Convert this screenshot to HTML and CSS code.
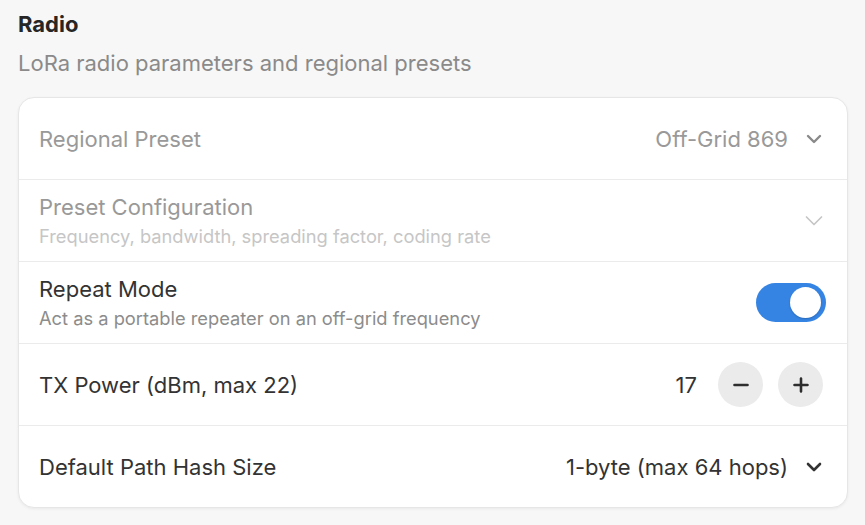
FILE: index.html
```html
<!DOCTYPE html>
<html>
<head>
<meta charset="utf-8">
<link rel="stylesheet" href="styles.css">
</head>
<body>
<div class="page">
  <h1 class="title">Radio</h1>
  <p class="subtitle">LoRa radio parameters and regional presets</p>
  <div class="card">
    <div class="row disabled">
      <div class="text"><div class="label">Regional Preset</div></div>
      <div class="control">
        <span class="value">Off-Grid 869</span>
        <svg class="chev" viewBox="0 0 16 16" width="16" height="16"><path d="M2 5 L8 11 L14 5" fill="none" stroke="currentColor" stroke-width="2.4" stroke-linecap="round" stroke-linejoin="round"/></svg>
      </div>
    </div>
    <div class="row disabled faint">
      <div class="text">
        <div class="label">Preset Configuration</div>
        <div class="sub">Frequency, bandwidth, spreading factor, coding rate</div>
      </div>
      <div class="control">
        <svg class="chev" viewBox="0 0 18 18" width="18" height="18"><path d="M1.5 5 L9 12.5 L16.5 5" fill="none" stroke="currentColor" stroke-width="1.7" stroke-linecap="round" stroke-linejoin="round"/></svg>
      </div>
    </div>
    <div class="row">
      <div class="text">
        <div class="label">Repeat Mode</div>
        <div class="sub">Act as a portable repeater on an off-grid frequency</div>
      </div>
      <div class="control">
        <div class="toggle on"><div class="knob"></div></div>
      </div>
    </div>
    <div class="row">
      <div class="text"><div class="label">TX Power (dBm, max 22)</div></div>
      <div class="control stepper">
        <span class="num">17</span>
        <button class="step"><svg viewBox="0 0 16 16" width="16" height="16"><path d="M1.5 8 H14.5" stroke="currentColor" stroke-width="2.6" stroke-linecap="round"/></svg></button>
        <button class="step"><svg viewBox="0 0 16 16" width="16" height="16"><path d="M1.5 8 H14.5 M8 1.5 V14.5" stroke="currentColor" stroke-width="2.6" stroke-linecap="round"/></svg></button>
      </div>
    </div>
    <div class="row">
      <div class="text"><div class="label">Default Path Hash Size</div></div>
      <div class="control">
        <span class="value dark">1-byte (max 64 hops)</span>
        <svg class="chev dark" viewBox="0 0 16 16" width="16" height="16"><path d="M2 5 L8 11 L14 5" fill="none" stroke="currentColor" stroke-width="2.6" stroke-linecap="round" stroke-linejoin="round"/></svg>
      </div>
    </div>
  </div>
</div>
</body>
</html>
```
FILE: styles.css
```css
* { box-sizing: border-box; }
html, body { margin: 0; padding: 0; }
body {
  background: #f7f7f7;
  font-family: Inter, "Noto Sans", sans-serif;
  color: #2e2e2e;
  width: 865px;
  height: 525px;
  overflow: hidden;
}
.page { padding: 11px 17px 0 18px; }
.title {
  margin: 0;
  font-size: 22px;
  font-weight: 700;
  line-height: 26px;
  color: #262626;
}
.subtitle {
  margin: 13px 0 0 0;
  font-size: 22px;
  line-height: 26px;
  color: #8a8a8a;
}
.card {
  margin-top: 21px;
  background: #fff;
  border: 1px solid #e6e6e6;
  border-radius: 16px;
  box-shadow: 0 1px 3px rgba(0,0,0,0.06);
  overflow: hidden;
}
.row {
  height: 82px;
  display: flex;
  align-items: center;
  justify-content: space-between;
  padding: 0 21px 0 20px;
  border-top: 1px solid #ebebeb;
}
.row:first-child { border-top: none; height: 81px; }
.label {
  font-size: 22px;
  line-height: 26px;
  color: #333;
}
.sub {
  margin-top: 5px;
  font-size: 18.3px;
  line-height: 22px;
  color: #8c8c8c;
}
.disabled .label { color: #999; }
.disabled .sub { color: #c6c6c6; }
.control {
  display: flex;
  align-items: center;
  gap: 18px;
}
.value { font-size: 22px; color: #999; }
.value.dark { color: #333; }
.chev { color: #8a8a8a; margin-right: 4px; }
.faint .chev { color: #c6c6c6; margin-right: 3px; }
.chev.dark { color: #333; }
.toggle {
  width: 70px;
  height: 39px;
  border-radius: 20px;
  background: #3584e4;
  position: relative;
}
.knob {
  position: absolute;
  top: 4px;
  right: 5px;
  width: 31px;
  height: 31px;
  border-radius: 50%;
  background: #fff;
  box-shadow: 0 1px 2px rgba(0,0,0,0.2);
}
.stepper { gap: 15px; margin-right: 3px; }
.num { font-size: 22px; color: #333; margin-right: 6px; }
.step {
  width: 45px;
  height: 45px;
  border-radius: 50%;
  border: none;
  background: #ebebeb;
  color: #2e2e2e;
  display: flex;
  align-items: center;
  justify-content: center;
  padding: 0;
}
```
